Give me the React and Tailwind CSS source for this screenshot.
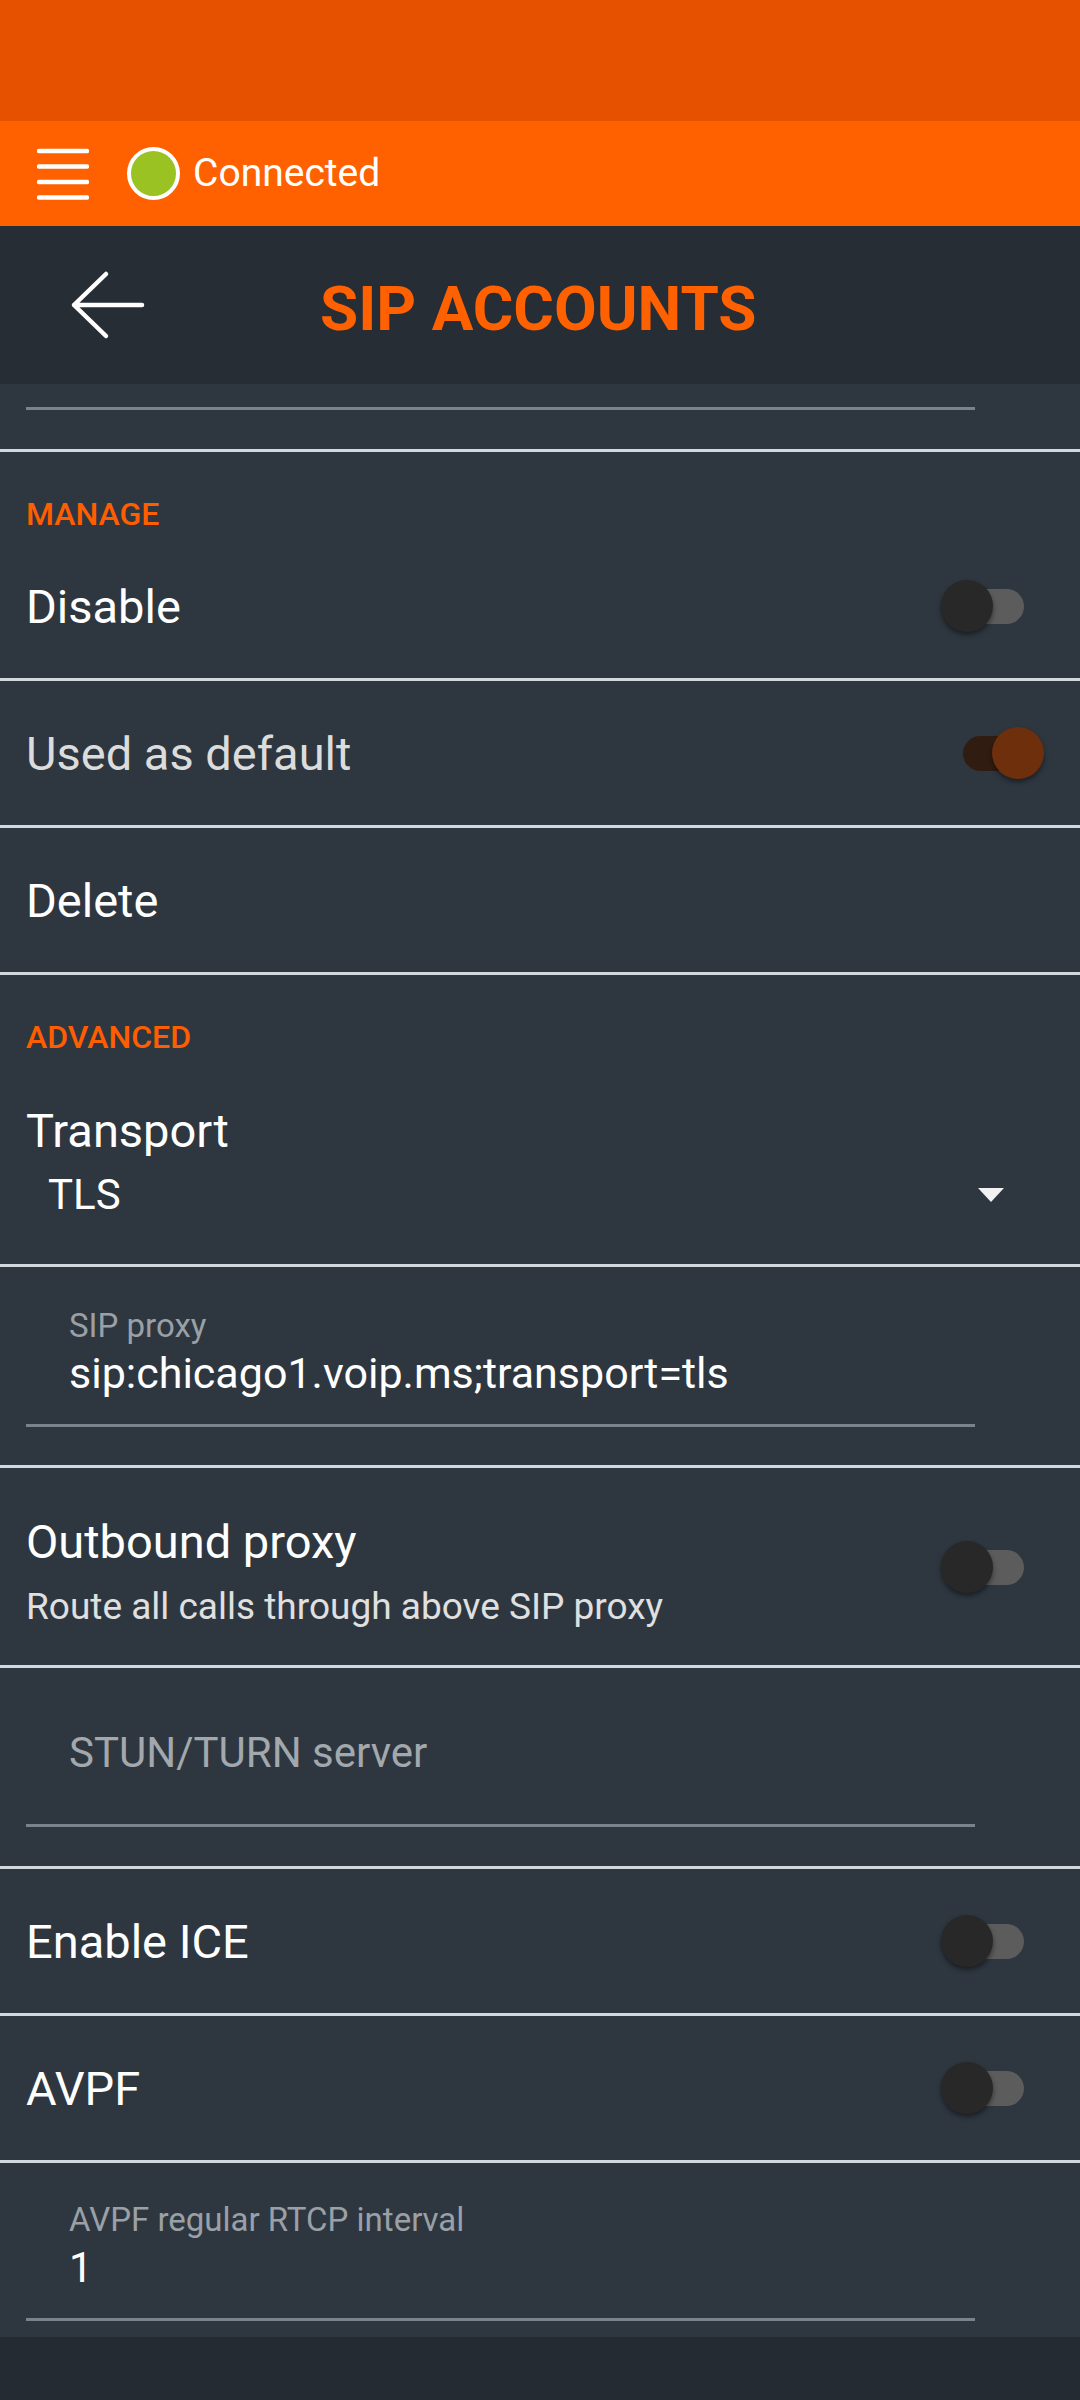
import React from 'react';

function Toggle({ on }) {
  return (
    <div className="relative w-[103px] h-[52px] shrink-0">
      <div
        className={`absolute left-[22px] top-[9px] w-[61px] h-[35px] rounded-full ${
          on ? 'bg-[#311c12]' : 'bg-[#5c5c5c]'
        }`}
      ></div>
      <div
        className={`absolute top-0 w-[52px] h-[52px] rounded-full shadow-[0_3px_5px_rgba(0,0,0,0.45)] ${
          on ? 'left-[51px] bg-[#6d2f0c]' : 'left-0 bg-[#282828]'
        }`}
      ></div>
    </div>
  );
}

function SwitchRow({ label, on, dim }) {
  return (
    <div className="h-[144px] flex items-center justify-between pl-[26px] pr-[36px]">
      <span className={`text-[47px] leading-[47px] ${dim ? 'text-[#dcdcdc]' : 'text-white'}`}>{label}</span>
      {on !== undefined && <Toggle on={on} />}
    </div>
  );
}

function SectionHeader({ children }) {
  return (
    <div className="h-[82px] pt-[46px] px-[26px]">
      <p className="text-[32px] leading-[32px] font-medium text-[#ff5e00]">{children}</p>
    </div>
  );
}

function Underline() {
  return <div className="ml-[26px] w-[949px] h-[3px] bg-[#7b838a]"></div>;
}

function Divider() {
  return <div className="h-[3px] bg-[#d2d9de]"></div>;
}

export default function App() {
  return (
    <div className="w-[1080px] h-[2400px] bg-[#252b33] font-['Roboto',sans-serif] overflow-hidden">
      {/* status bar */}
      <div className="h-[121px] bg-[#e65100]"></div>

      {/* connection bar */}
      <div className="h-[105px] bg-[#ff6100] flex items-center">
        <svg width="52" height="52" viewBox="0 0 52 52" className="ml-[37px]">
          {[3, 18.5, 34, 49.5].map((y) => (
            <line key={y} x1="2" x2="50" y1={y} y2={y} stroke="white" strokeWidth="4.5" strokeLinecap="round" />
          ))}
        </svg>
        <div className="ml-[38px] w-[53px] h-[53px] rounded-full border-[4px] border-white bg-[#9bc223] shrink-0"></div>
        <span className="ml-[13px] text-[39px] leading-[39px] text-white">Connected</span>
      </div>

      {/* title bar */}
      <div className="h-[158px] bg-[#262d35] flex items-center">
        <svg width="80" height="70" viewBox="0 0 80 70" className="ml-[68px]">
          <path d="M6 35 H74 M38 4 L6 35 L38 66" fill="none" stroke="white" strokeWidth="4.5" strokeLinecap="round" strokeLinejoin="round" />
        </svg>
        <h1 className="ml-[172px] pt-[8px] text-[62px] leading-[62px] font-bold text-[#ff6100]">SIP ACCOUNTS</h1>
      </div>

      {/* content */}
      <div className="bg-[#2e3740]">
        <div className="h-[65px] pt-[23px]">
          <Underline />
        </div>
        <Divider />

        <SectionHeader>MANAGE</SectionHeader>
        <SwitchRow label="Disable" on={false} />
        <Divider />
        <SwitchRow label="Used as default" on={true} dim />
        <Divider />
        <SwitchRow label="Delete" />
        <Divider />

        <div className="h-[289px]">
          <SectionHeader>ADVANCED</SectionHeader>
          <p className="mt-[50px] pl-[26px] text-[47px] leading-[47px] text-white">Transport</p>
          <div className="mt-[20px] flex items-center justify-between pl-[48px] pr-[76px]">
            <span className="text-[42px] leading-[42px] text-white">TLS</span>
            <svg width="26" height="14" viewBox="0 0 26 14">
              <path d="M0 0 H26 L13 14 Z" fill="#f2f2f2" />
            </svg>
          </div>
        </div>
        <Divider />

        <div className="h-[198px] pt-[42px]">
          <p className="pl-[69px] text-[33px] leading-[33px] text-[#9aa0a6]">SIP proxy</p>
          <p className="pl-[69px] mt-[10px] text-[43px] leading-[43px] text-white">sip:chicago1.voip.ms;transport=tls</p>
          <div className="mt-[29px]">
            <Underline />
          </div>
        </div>
        <Divider />

        <div className="h-[197px] flex items-center justify-between pl-[26px] pr-[36px]">
          <div className="pt-[9px]">
            <p className="text-[47px] leading-[47px] text-white">Outbound proxy</p>
            <p className="mt-[23px] text-[37px] leading-[37px] text-[#e0e0e0]">Route all calls through above SIP proxy</p>
          </div>
          <Toggle on={false} />
        </div>
        <Divider />

        <div className="h-[198px] pt-[64px]">
          <p className="pl-[69px] text-[42px] leading-[42px] text-[#a3a8ad]">STUN/TURN server</p>
          <div className="mt-[50px]">
            <Underline />
          </div>
        </div>
        <Divider />

        <SwitchRow label="Enable ICE" on={false} />
        <Divider />
        <SwitchRow label="AVPF" on={false} />
        <Divider />

        <div className="h-[174px] pt-[40px]">
          <p className="pl-[69px] text-[33px] leading-[33px] text-[#9aa0a6]">AVPF regular RTCP interval</p>
          <p className="pl-[69px] mt-[11px] text-[42px] leading-[42px] text-white">1</p>
          <div className="mt-[29px]">
            <Underline />
          </div>
        </div>
      </div>
    </div>
  );
}
